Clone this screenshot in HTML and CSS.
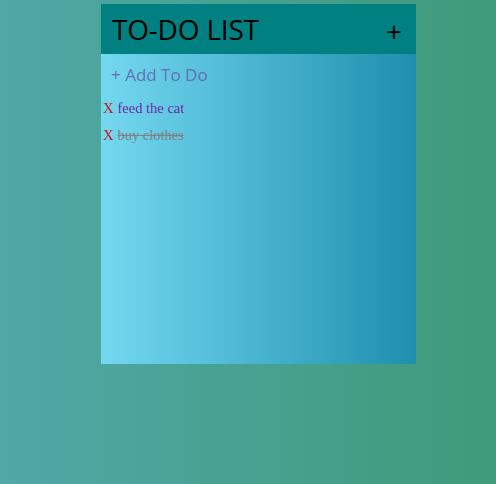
FILE: index.html
```html
<!DOCTYPE html>
<html>
<head>
<meta charset="utf-8">
<link rel="stylesheet" href="styles.css">
</head>
<body>
<div class="todo">
  <div class="todo-header">
    <h1 class="todo-title">TO-DO LIST</h1>
    <span class="todo-plus">+</span>
  </div>
  <div class="todo-body">
    <div class="todo-add">+ Add To Do</div>
    <ul class="todo-list">
      <li class="todo-item"><span class="todo-x">X</span> <span class="todo-text">feed the cat</span></li>
      <li class="todo-item done"><span class="todo-x">X</span> <span class="todo-text">buy clothes</span></li>
    </ul>
  </div>
</div>
</body>
</html>
```

FILE: styles.css
```css
html, body {
  margin: 0;
  height: 100%;
}
body {
  background: linear-gradient(to right, #4fa8a6, #3f9a7a);
  padding-top: 4px;
  box-sizing: border-box;
}
.todo {
  width: 315px;
  height: 360px;
  margin-left: 101px;
  display: flex;
  flex-direction: column;
}
.todo-header {
  height: 50px;
  background: #008080;
  display: flex;
  align-items: center;
  justify-content: space-between;
  padding: 0 14px 0 11px;
}
.todo-title {
  margin: 0;
  font-family: "Open Sans", sans-serif;
  font-weight: 400;
  font-size: 28px;
  color: #000;
  letter-spacing: -0.2px;
}
.todo-plus {
  font-family: "Open Sans", sans-serif;
  font-size: 28px;
  color: #000;
  margin-top: 4px;
}
.todo-body {
  flex: 1;
  background: linear-gradient(to right, #74d8f0, #1e8fae);
}
.todo-add {
  font-family: "Open Sans", sans-serif;
  font-size: 17px;
  line-height: 20px;
  color: #6470b8;
  padding: 11px 0 0 10px;
  margin-bottom: 15px;
}
.todo-list {
  list-style: none;
  margin: 0;
  padding: 0 0 0 2px;
  font-family: "Liberation Serif", serif;
  font-size: 14.5px;
}
.todo-item {
  height: 27px;
  line-height: 17px;
}
.todo-x {
  color: #c0221e;
  font-size: 15px;
}
.todo-text {
  color: #6a2ca8;
}
.done .todo-text {
  color: #808080;
  text-decoration: line-through;
}
```
